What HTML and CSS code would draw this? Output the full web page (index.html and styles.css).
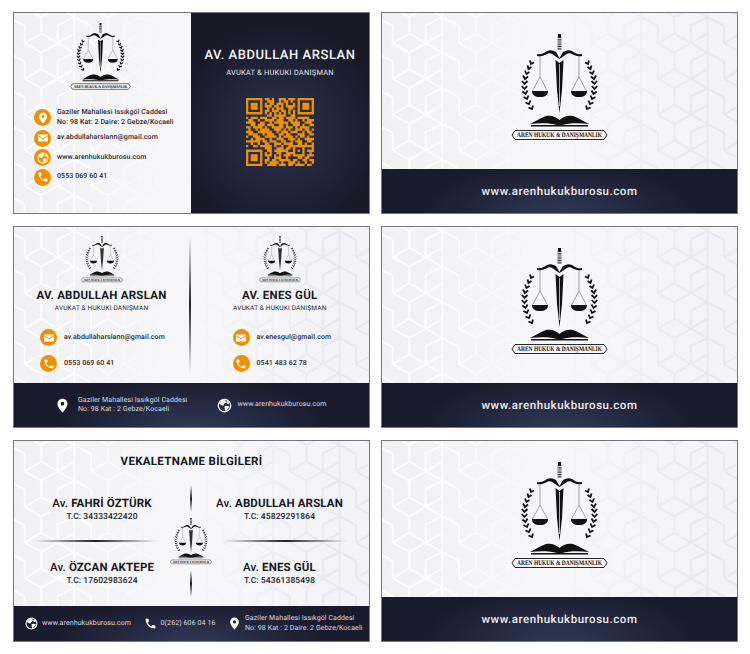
FILE: index.html
```html
<!DOCTYPE html>
<html lang="tr">
<head>
<meta charset="utf-8">
<title>Aren Hukuk &amp; Danışmanlık</title>
<link rel="stylesheet" href="styles.css">
</head>
<body>
<svg class="defs" aria-hidden="true">
  <defs>
    <pattern id="hex-w" width="66.67" height="36" patternUnits="userSpaceOnUse" x="10.7" y="4">
      <path fill="none" stroke="#fff" stroke-width="2" d="M16.670 0V16.670L0 26.670L16.670 36L33.330 26.670L16.670 16.670M33.330 26.670V8.330L50 0M33.330 26.670L50 16.670M50 0V36M33.330 26.670L50 36M50 0L66.670 9V26.670M0 9V26.670"/>
    </pattern>
    <pattern id="hex-l" width="66.67" height="36" patternUnits="userSpaceOnUse" x="10.7" y="4">
      <path fill="none" stroke="#e7e7f0" stroke-width="2" d="M16.670 0V16.670L0 26.670L16.670 36L33.330 26.670L16.670 16.670M33.330 26.670V8.330L50 0M33.330 26.670L50 16.670M50 0V36M33.330 26.670L50 36M50 0L66.670 9V26.670M0 9V26.670"/>
    </pattern>
    <linearGradient id="fade-l"><stop offset=".1" stop-color="#fff"/><stop offset=".5" stop-color="#000"/></linearGradient>
    <linearGradient id="fade-r"><stop offset=".5" stop-color="#000"/><stop offset=".9" stop-color="#fff"/></linearGradient>
    <mask id="mask-l" maskContentUnits="objectBoundingBox"><rect width="1" height="1" fill="url(#fade-l)"/></mask>
    <mask id="mask-r" maskContentUnits="objectBoundingBox"><rect width="1" height="1" fill="url(#fade-r)"/></mask>
    <g id="laurel" fill="none" stroke="#111" stroke-width="1.8">
      <path d="M19 26.500L20 30L23 28.500"/>
      <path d="M16.500 31.500L17.500 35L20.500 33"/>
      <path d="M14 36.500L15.500 40L18.500 38"/>
      <path d="M12 41.500L14 45L17 42.500"/>
      <path d="M11 47L13.500 50L16.500 47"/>
      <path d="M10.800 52L13.500 55L16.200 52"/>
      <path d="M11.300 57.500L14.500 60L16.500 56.500"/>
      <path d="M12.500 63L16 65L17.500 61.500"/>
      <path d="M14.500 68.500L18 70L19.500 66.500"/>
      <path d="M17.500 73.500L21 75L22 71.500"/>
    </g>
    <symbol id="logo" viewBox="0 0 97 108">
      <path fill="#111" d="M47 0h3v3h-3z"/>
      <path fill="none" stroke="#333" stroke-width="4" stroke-dasharray="1 .8" d="M48.500 3V16"/>
      <path fill="#111" d="M26 20c4 1 7-1 10-3 4-2 7 0 9 1l3.500 6 3.500-6c2-1 5-3 9-1 3 2 6 4 10 3v2c-5 1-8-1-11-2.500-3-1-5 1-7 2.500l-4.500 3-4.500-3c-2-1.500-4-3.500-7-2.500C34 21 31 23 26 22z"/>
      <path fill="#111" d="M44.500 26l4 3 4-3-1.500 30-2.500 23-2.500-23z"/>
      <path fill="none" stroke="#f4f4f6" stroke-width=".7" d="M48.500 30V72"/>
      <path fill="none" stroke="#666" stroke-width=".6" d="M29 22V43L21.500 57M29 43L36.500 57M68 22V43L60.500 57M68 43L75.500 57"/>
      <path fill="#111" d="M21 57h16c0 4-3 6-8 6s-8-2-8-6zM60 57h16c0 4-3 6-8 6s-8-2-8-6z"/>
      <use href="#laurel"/>
      <use href="#laurel" transform="translate(97) scale(-1 1)"/>
      <path fill="#111" d="M19 90c6-3 10-6 16-8 6-1 10 1 13.500 4 3.500-3 7.500-5 13.500-4 6 2 10 5 16 8-10-1-20-1-27 1h-5c-7-2-17-2-27-1z"/>
      <path fill="#111" d="M20 91h57v1.500H20z"/>
      <path fill="#f7f7f9" stroke="#111" stroke-width=".9" d="M4 96.500h89l3 4.500-3 4.500H4L1 101z"/>
      <text class="logo-text" x="48.500" y="103.300" text-anchor="middle" textLength="85" lengthAdjust="spacingAndGlyphs">AREN HUKUK &amp; DANIŞMANLIK</text>
    </symbol>
    <symbol id="i-phone" viewBox="0 0 24 24"><path fill="currentColor" d="M6.620 10.790c1.440 2.830 3.760 5.140 6.590 6.590l2.200-2.200c.27-.27.67-.36 1.020-.24 1.120.37 2.330.57 3.570.57.55 0 1 .45 1 1V20c0 .55-.45 1-1 1-9.390 0-17-7.610-17-17 0-.55.45-1 1-1h3.500c.55 0 1 .45 1 1 0 1.250.2 2.450.57 3.570.11.35.03.74-.25 1.020l-2.200 2.200z"/></symbol>
    <symbol id="i-pin" viewBox="0 0 24 24"><path fill="currentColor" fill-rule="evenodd" d="M12 1C7.600 1 4 4.600 4 9c0 6 8 14 8 14s8-8 8-14c0-4.400-3.600-8-8-8zm0 11a3 3 0 110-6 3 3 0 010 6z"/></symbol>
    <symbol id="i-mail" viewBox="0 0 24 24"><path fill="currentColor" d="M3 5h18c.6 0 1 .4 1 1v.6l-10 6-10-6V6c0-.6.4-1 1-1zM2 8.600l10 6 10-6V18c0 .6-.4 1-1 1H3c-.6 0-1-.4-1-1z"/></symbol>
    <symbol id="i-globe" viewBox="0 0 24 24">
      <path fill="currentColor" fill-rule="evenodd" d="M12 1a11 11 0 100 22 11 11 0 000-22zm0 2a9 9 0 110 18 9 9 0 010-18z"/>
      <path fill="currentColor" d="M8 3L13.500 3.500L14.500 7L11 9.500L10.500 12L7 11.500L3.500 9ZM12 13L16.500 12.500L20.500 14L17 18L14 21.500L12.500 18ZM16 4L20.500 8.500L17 9.500L15 7Z"/>
    </symbol>
    <symbol id="card-bg" viewBox="0 0 357 202" preserveAspectRatio="none">
      <rect width="357" height="202" fill="url(#hex-w)" mask="url(#mask-l)"/>
      <rect width="357" height="202" fill="url(#hex-l)" mask="url(#mask-r)"/>
    </symbol>
    <symbol id="qr" viewBox="0 0 29 29">
      <path fill="none" stroke="currentColor" d="M0 .5h7M22 .5h7M0 6.500h7M22 6.500h7M0 22.500h7M0 28.500h7M.5 0v7M6.500 0v7M22.500 0v7M28.500 0v7M.5 22v7M6.500 22v7"/>
      <path fill="currentColor" d="M2 2h3v3H2zM24 2h3v3h-3zM2 24h3v3H2z"/>
      <path fill="none" stroke="currentColor" d="M8 .5h2M11 .5h1M14 .5h3M18 .5h3M9 1.500h3M14 1.500h1M16 1.500h2M19 1.500h1M8 2.500h1M10 2.500h2M13 2.500h3M17 2.500h1M20 2.500h1M8 3.500h3M12 3.500h2M15 3.500h1M17 3.500h4M9 4.500h1M11 4.500h1M13 4.500h3M18 4.500h2M8 5.500h2M11 5.500h3M15 5.500h2M18 5.500h1M20 5.500h1M8 6.500h1M10 6.500h1M12 6.500h1M14 6.500h1M16 6.500h1M18 6.500h1M20 6.500h1M9 7.500h2M12 7.500h5M19 7.500h2M0 8.500h1M2 8.500h3M6 8.500h3M11 8.500h2M14 8.500h2M17 8.500h4M22 8.500h5M1 9.500h2M5 9.500h1M8 9.500h4M13 9.500h3M18 9.500h2M21 9.500h1M24 9.500h1M26 9.500h3M0 10.500h4M6 10.500h2M10 10.500h1M12 10.500h6M19 10.500h4M25 10.500h3M2 11.500h2M5 11.500h3M9 11.500h3M14 11.500h2M17 11.500h1M20 11.500h3M24 11.500h1M27 11.500h2M0 12.500h2M3 12.500h4M8 12.500h1M11 12.500h5M17 12.500h3M21 12.500h1M23 12.500h4M1 13.500h1M4 13.500h1M6 13.500h4M12 13.500h3M16 13.500h1M18 13.500h1M21 13.500h3M25 13.500h2M28 13.500h1M0 14.500h3M5 14.500h6M13 14.500h1M15 14.500h3M19 14.500h3M24 14.500h1M26 14.500h2M1 15.500h4M7 15.500h1M9 15.500h3M14 15.500h2M17 15.500h2M22 15.500h3M27 15.500h2M0 16.500h1M3 16.500h3M8 16.500h5M14 16.500h1M16 16.500h4M21 16.500h1M23 16.500h2M26 16.500h1M2 17.500h1M4 17.500h4M10 17.500h1M13 17.500h3M18 17.500h3M22 17.500h1M25 17.500h4M0 18.500h6M7 18.500h2M10 18.500h3M15 18.500h2M19 18.500h1M21 18.500h3M26 18.500h2M2 19.500h1M5 19.500h1M8 19.500h2M12 19.500h3M16 19.500h4M22 19.500h2M25 19.500h1M28 19.500h1M0 20.500h1M3 20.500h2M6 20.500h5M12 20.500h1M15 20.500h1M18 20.500h11M8 21.500h3M13 21.500h3M17 21.500h2M20 21.500h1M24 21.500h1M28 21.500h1M9 22.500h2M12 22.500h6M20 22.500h1M22 22.500h1M24 22.500h1M26 22.500h3M8 23.500h1M10 23.500h1M13 23.500h2M17 23.500h3M20 23.500h1M24 23.500h1M27 23.500h1M8 24.500h3M12 24.500h1M14 24.500h1M16 24.500h3M20 24.500h5M26 24.500h3M9 25.500h1M12 25.500h3M17 25.500h1M22 25.500h2M25 25.500h2M8 26.500h2M11 26.500h2M14 26.500h5M20 26.500h2M24 26.500h2M27 26.500h2M8 27.500h1M10 27.500h4M15 27.500h1M18 27.500h3M22 27.500h1M25 27.500h1M28 27.500h1M9 28.500h4M14 28.500h3M18 28.500h2M21 28.500h4M26 28.500h2"/>
    </symbol>
  </defs>
</svg>

<main class="sheet">
  <!-- Card 1 front -->
  <section class="card card-split">
    <svg class="card-pattern" aria-hidden="true"><use href="#card-bg"/></svg>
    <div class="split-left">
      <svg class="logo logo-md"><use href="#logo"/></svg>
      <ul class="contacts contacts-main">
        <li class="contact"><span class="ico"><svg><use href="#i-pin"/></svg></span><span>Gaziler Mahallesi Issıkgöl Caddesi<br>No: 98 Kat: 2 Daire: 2 Gebze/Kocaeli</span></li>
        <li class="contact"><span class="ico"><svg><use href="#i-mail"/></svg></span><span>av.abdullaharslann@gmail.com</span></li>
        <li class="contact"><span class="ico"><svg><use href="#i-globe"/></svg></span><span>www.arenhukukburosu.com</span></li>
        <li class="contact"><span class="ico"><svg><use href="#i-phone"/></svg></span><span>0553 069 60 41</span></li>
      </ul>
    </div>
    <div class="split-right">
      <h2 class="hero-name">AV. ABDULLAH ARSLAN</h2>
      <p class="hero-role">AVUKAT &amp; HUKUKI DANIŞMAN</p>
      <svg class="qr"><use href="#qr"/></svg>
    </div>
  </section>

  <!-- Card 1 back -->
  <section class="card card-back">
    <svg class="card-pattern" aria-hidden="true"><use href="#card-bg"/></svg>
    <div class="back-main"><svg class="logo logo-lg"><use href="#logo"/></svg></div>
    <div class="band band-back">www.arenhukukburosu.com</div>
  </section>

  <!-- Card 2 front -->
  <section class="card card-duo">
    <svg class="card-pattern" aria-hidden="true"><use href="#card-bg"/></svg>
    <div class="duo-main">
      <div class="person">
        <svg class="logo logo-sm"><use href="#logo"/></svg>
        <h2 class="person-name">AV. ABDULLAH ARSLAN</h2>
        <p class="person-role">AVUKAT &amp; HUKUKI DANIŞMAN</p>
        <ul class="contacts contacts-duo contacts-a">
          <li class="contact"><span class="ico"><svg><use href="#i-mail"/></svg></span><span>av.abdullaharslann@gmail.com</span></li>
          <li class="contact"><span class="ico"><svg><use href="#i-phone"/></svg></span><span>0553 069 60 41</span></li>
        </ul>
      </div>
      <div class="vline vline-tall"></div>
      <div class="person">
        <svg class="logo logo-sm"><use href="#logo"/></svg>
        <h2 class="person-name">AV. ENES GÜL</h2>
        <p class="person-role">AVUKAT &amp; HUKUKI DANIŞMAN</p>
        <ul class="contacts contacts-duo contacts-b">
          <li class="contact"><span class="ico"><svg><use href="#i-mail"/></svg></span><span>av.enesgul@gmail.com</span></li>
          <li class="contact"><span class="ico"><svg><use href="#i-phone"/></svg></span><span>0541 483 62 78</span></li>
        </ul>
      </div>
    </div>
    <div class="band band-duo">
      <div class="band-item band-item-addr"><svg class="band-ico band-ico-lg"><use href="#i-pin"/></svg><span>Gaziler Mahallesi Issıkgöl Caddesi<br>No: 98 Kat : 2 Gebze/Kocaeli</span></div>
      <div class="band-item"><svg class="band-ico band-ico-lg"><use href="#i-globe"/></svg><span>www.arenhukukburosu.com</span></div>
    </div>
  </section>

  <!-- Card 2 back -->
  <section class="card card-back">
    <svg class="card-pattern" aria-hidden="true"><use href="#card-bg"/></svg>
    <div class="back-main"><svg class="logo logo-lg"><use href="#logo"/></svg></div>
    <div class="band band-back">www.arenhukukburosu.com</div>
  </section>

  <!-- Card 3 front -->
  <section class="card card-proxy">
    <svg class="card-pattern" aria-hidden="true"><use href="#card-bg"/></svg>
    <div class="proxy-main">
      <h2 class="proxy-title">VEKALETNAME BİLGİLERİ</h2>
      <div class="proxy-grid">
        <div class="proxy-col proxy-col-left">
          <div class="proxy-person"><h3 class="proxy-name"><span class="av">Av.</span> FAHRİ ÖZTÜRK</h3><p class="proxy-id">T.C: 34333422420</p></div>
          <div class="hline hline-left"></div>
          <div class="proxy-person"><h3 class="proxy-name"><span class="av">Av.</span> ÖZCAN AKTEPE</h3><p class="proxy-id">T.C: 17602983624</p></div>
        </div>
        <div class="proxy-center">
          <div class="vline vline-short"></div>
          <svg class="logo logo-sm"><use href="#logo"/></svg>
          <div class="vline vline-short"></div>
        </div>
        <div class="proxy-col proxy-col-right">
          <div class="proxy-person"><h3 class="proxy-name"><span class="av">Av.</span> ABDULLAH ARSLAN</h3><p class="proxy-id">T.C: 45829291864</p></div>
          <div class="hline hline-right"></div>
          <div class="proxy-person"><h3 class="proxy-name"><span class="av">Av.</span> ENES GÜL</h3><p class="proxy-id">T.C: 54361385498</p></div>
        </div>
      </div>
    </div>
    <div class="band band-proxy">
      <div class="band-item"><svg class="band-ico"><use href="#i-globe"/></svg><span>www.arenhukukburosu.com</span></div>
      <div class="band-item"><svg class="band-ico"><use href="#i-phone"/></svg><span>0(262) 606 04 16</span></div>
      <div class="band-item"><svg class="band-ico"><use href="#i-pin"/></svg><span>Gaziler Mahallesi Issıkgöl Caddesi<br>No: 98 Kat : 2 Daire: 2 Gebze/Kocaeli</span></div>
    </div>
  </section>

  <!-- Card 3 back -->
  <section class="card card-back">
    <svg class="card-pattern" aria-hidden="true"><use href="#card-bg"/></svg>
    <div class="back-main"><svg class="logo logo-lg"><use href="#logo"/></svg></div>
    <div class="band band-back">www.arenhukukburosu.com</div>
  </section>
</main>
</body>
</html>
```
FILE: styles.css
```css
* { box-sizing: border-box; }
html, body { margin: 0; padding: 0; background: #fff; }
body {
  font-family: "Roboto", "Liberation Sans", sans-serif;
  color: #1b1b22;
  text-rendering: geometricPrecision;
}
h2, h3, p, ul { margin: 0; padding: 0; list-style: none; }

.defs { position: absolute; width: 0; height: 0; }

.sheet {
  display: grid;
  grid-template-columns: 357px 357px;
  grid-auto-rows: 202px;
  gap: 12px 11px;
  padding: 12px 0 0 13px;
}

.card {
  position: relative;
  display: flex;
  overflow: hidden;
  border: 1px solid #77777c;
  background: linear-gradient(90deg, #f1f1f4 0%, #f7f7f9 50%, #f4f4f8 100%);
}
.card-back, .card-duo, .card-proxy { flex-direction: column; }

.card-pattern { position: absolute; inset: 0; width: 100%; height: 100%; }
.card-pattern use { width: 100%; height: 100%; }

.logo-text {
  font-family: "Liberation Serif", serif;
  font-weight: 700;
  font-size: 6.800px;
  fill: #111;
}
.logo { display: block; position: relative; flex: none; }
.logo-lg { width: 97px; height: 108px; }
.logo-md { width: 61px; height: 68px; }
.logo-sm { width: 42px; height: 47px; }

.band {
  position: relative;
  flex: none;
  display: flex;
  align-items: center;
  color: #eeeef2;
  background: radial-gradient(ellipse 40% 120% at 50% 100%, #2f3855 0%, #191a2b 100%);
}

/* Card 1 */
.split-left {
  position: relative;
  flex: none;
  width: 177px;
  padding: 10px 0 0;
  display: flex;
  flex-direction: column;
}
.split-left .logo { margin: 0 0 0 56px; }
.split-right {
  position: relative;
  flex: 1;
  display: flex;
  flex-direction: column;
  align-items: center;
  padding-top: 35px;
  background: radial-gradient(ellipse 60% 55% at 50% 58%, #2c3450 0%, #181826 100%);
}
.hero-name {
  font-size: 13px;
  line-height: 16px;
  font-weight: 500;
  letter-spacing: .55px;
  color: #f4f4f6;
}
.hero-role {
  margin-top: 3px;
  font-size: 7.500px;
  line-height: 11px;
  letter-spacing: .2px;
  color: #e2e2e8;
}
.qr { width: 68px; height: 68px; margin-top: 20px; color: #ee9100; }

.contacts { position: relative; display: flex; flex-direction: column; }
.contacts-main { margin-top: 17px; padding-left: 20px; gap: 2.500px; }
.contact {
  display: flex;
  align-items: center;
  gap: 6px;
  font-size: 7px;
  line-height: 9.500px;
  font-weight: 500;
  letter-spacing: .1px;
  color: #2a2a30;
  white-space: nowrap;
}
.ico {
  flex: none;
  width: 17px;
  height: 17px;
  border-radius: 50%;
  background: #ee9100;
  color: #fff;
  display: flex;
  align-items: center;
  justify-content: center;
}
.ico svg { width: 12px; height: 12px; }

/* Back cards */
.back-main {
  position: relative;
  flex: 1;
  display: flex;
  align-items: center;
  justify-content: center;
  padding-bottom: 6px;
}
.band-back {
  height: 44px;
  justify-content: center;
  font-size: 11.500px;
  font-weight: 500;
  letter-spacing: .55px;
}

/* Card 2 */
.duo-main { position: relative; flex: 1; display: flex; min-height: 0; }
.person {
  flex: 1;
  display: flex;
  flex-direction: column;
  align-items: center;
  padding-top: 9px;
}
.person:first-child { flex: none; width: 175px; }
.person-name {
  margin-top: 5px;
  font-size: 11.500px;
  line-height: 14px;
  font-weight: 700;
  letter-spacing: .25px;
  color: #17171c;
}
.person-role {
  margin-top: 1px;
  font-size: 6.500px;
  line-height: 10px;
  letter-spacing: .18px;
  color: #2a2a30;
}
.contacts-duo { align-self: flex-start; margin-top: 16px; gap: 9px; }
.contacts-duo .contact { gap: 7px; }
.contacts-a { padding-left: 26px; }
.contacts-b { padding-left: 42px; }
.vline {
  flex: none;
  width: 1.500px;
  background: linear-gradient(180deg, transparent, #222 50%, transparent);
}
.vline-tall { height: 136px; margin-top: 10px; }
.band-duo { height: 44px; padding-left: 41px; gap: 30px; }
.band-item {
  display: flex;
  align-items: center;
  gap: 5px;
  font-size: 7px;
  line-height: 9.500px;
  letter-spacing: .1px;
  color: #dcdce4;
  white-space: nowrap;
}
.band-item-addr { gap: 8px; }
.band-ico { flex: none; width: 13px; height: 13px; color: #fff; }
.band-ico-lg { width: 15px; height: 15px; }

/* Card 3 */
.proxy-main { position: relative; flex: 1; display: flex; flex-direction: column; min-height: 0; }
.proxy-title {
  padding-top: 12px;
  text-align: center;
  font-size: 11.500px;
  line-height: 16px;
  font-weight: 700;
  letter-spacing: .3px;
  color: #17171c;
}
.proxy-grid { display: grid; grid-template-columns: 156px 42px 1fr; margin-top: 16px; height: 112px; }
.proxy-col { display: flex; flex-direction: column; justify-content: center; gap: 17px; }
.proxy-col-left { padding-left: 20px; }
.proxy-col-right { padding-right: 22px; }
.proxy-person { text-align: center; }
.proxy-name {
  font-size: 11.500px;
  line-height: 16px;
  font-weight: 700;
  letter-spacing: .15px;
  color: #17171c;
}
.proxy-name .av { font-weight: 500; }
.proxy-id {
  font-size: 8.500px;
  line-height: 12px;
  font-weight: 500;
  letter-spacing: .1px;
  color: #1f1f25;
}
.hline { height: 1.500px; background: linear-gradient(90deg, transparent, #222 50%, transparent); }
.hline-left { margin-right: 13px; }
.hline-right { margin-left: 12px; }
.proxy-center { display: flex; flex-direction: column; align-items: center; justify-content: space-between; }
.vline-short { height: 27px; }
.band-proxy {
  height: 35px;
  gap: 12.500px;
  padding-left: 11px;
}
.band-proxy .band-item { gap: 4px; }
```
